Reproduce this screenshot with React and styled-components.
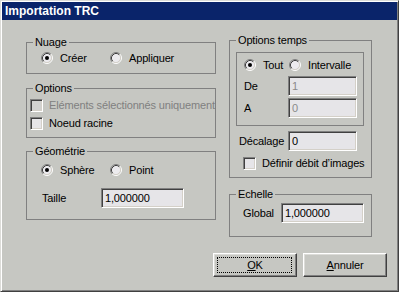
import React from 'react';
import styled, { createGlobalStyle } from 'styled-components';

const GlobalStyle = createGlobalStyle`
  html, body {
    margin: 0;
    padding: 0;
    background: #c6c7c2;
  }
  body {
    font-family: "Liberation Sans", Arial, sans-serif;
    font-size: 11px;
    letter-spacing: -0.15px;
    color: #000;
  }
`;

const Window = styled.div`
  box-sizing: border-box;
  width: 399px;
  height: 292px;
  padding: 1px;
  background: #c6c7c2;
  border: 1px solid;
  border-color: #dcdcd8 #404040 #404040 #dcdcd8;
  box-shadow: inset 1px 1px 0 #fff, inset -1px -1px 0 #808080;
  display: flex;
  flex-direction: column;
`;

const TitleBar = styled.div`
  height: 18px;
  background: #0a246a;
  display: flex;
  align-items: center;
  padding-left: 3px;
`;

const Title = styled.span`
  color: #fff;
  font-weight: bold;
  font-size: 12px;
  letter-spacing: 0;
`;

const Body = styled.div`
  padding: 14px 0 0 24px;
`;

const Columns = styled.div`
  display: flex;
  align-items: flex-start;
  gap: 13px;
`;

const Column = styled.div`
  display: flex;
  flex-direction: column;
  width: ${(p) => p.$width}px;
  margin-top: ${(p) => p.$offset || 0}px;
`;

const Group = styled.fieldset`
  margin: ${(p) => p.$gap || 0}px 0 0 0;
  padding: 0;
  border: 1px solid #808080;
  min-width: 0;
`;

const Legend = styled.legend`
  margin-left: 6px;
  padding: 0 2px;
  line-height: 13px;
  font-size: 11px;
`;

const GroupBody = styled.div`
  padding: ${(p) => p.$pad};
`;

const Row = styled.div`
  display: flex;
  align-items: center;
  height: ${(p) => p.$h || 18}px;
  margin-top: ${(p) => p.$mt || 0}px;
  padding-left: ${(p) => p.$pl || 0}px;
  white-space: nowrap;
`;

const Choice = styled.label`
  display: flex;
  align-items: center;
  width: ${(p) => (p.$width ? `${p.$width}px` : 'auto')};
  color: ${(p) => (p.$disabled ? '#808080' : '#000')};
`;

const Mark = styled.span`
  display: inline-flex;
  margin-right: ${(p) => p.$gap || 7}px;
`;

const CheckBox = styled.span`
  box-sizing: border-box;
  width: 13px;
  height: 13px;
  border: 1px solid;
  border-color: #808080 #fff #fff #808080;
  box-shadow: inset 1px 1px 0 #404040, inset -1px -1px 0 #d4d0c8;
  background: ${(p) => (p.$disabled ? '#d2d2d0' : '#e6e5e8')};
`;

const FieldLabel = styled.span`
  width: ${(p) => p.$width}px;
`;

const Field = styled.div`
  box-sizing: border-box;
  width: ${(p) => p.$width}px;
  height: 20px;
  display: flex;
  align-items: center;
  padding-left: 3px;
  border: 1px solid;
  border-color: #808080 #fff #fff #808080;
  box-shadow: inset 1px 1px 0 #404040, inset -1px -1px 0 #d4d0c8;
  background: #e6e5e8;
  color: ${(p) => (p.$disabled ? '#8a8a8a' : '#000')};
`;

const InsetBox = styled.div`
  width: 128px;
  box-sizing: border-box;
  margin: 5px 0 0 6px;
  padding: 3px 0 7px 7px;
  border: 1px solid #808080;
`;

const ButtonRow = styled.div`
  display: flex;
  justify-content: flex-end;
  gap: 6px;
  margin-top: 16px;
  padding-right: 10px;
`;

const Button = styled.button`
  box-sizing: border-box;
  position: relative;
  width: 84px;
  height: 24px;
  padding: 0;
  font-family: inherit;
  font-size: 11px;
  letter-spacing: inherit;
  color: #000;
  background: #c6c7c2;
  border: 1px solid;
  border-color: #fff #404040 #404040 #fff;
  box-shadow: inset -1px -1px 0 #808080, inset 1px 1px 0 #dcdcd8;
  outline: none;
`;

const Focus = styled.span`
  position: absolute;
  inset: 3px 4px 3px 3px;
  border: 1px dotted #000;
`;

const Key = styled.span`
  text-decoration: underline;
`;

function Radio({ checked }) {
  return (
    <svg width="12" height="12" viewBox="0 0 12 12">
      <circle cx="6" cy="6" r="4.5" fill="#ecebee" />
      <path d="M2.11 9.89 A5.5 5.5 0 0 1 9.89 2.11" stroke="#808080" fill="none" />
      <path d="M9.89 2.11 A5.5 5.5 0 0 1 2.11 9.89" stroke="#fff" fill="none" />
      <path d="M2.82 9.18 A4.5 4.5 0 0 1 9.18 2.82" stroke="#404040" fill="none" />
      <path d="M9.18 2.82 A4.5 4.5 0 0 1 2.82 9.18" stroke="#d4d0c8" fill="none" />
      {checked && <circle cx="6" cy="6" r="2" fill="#000" />}
    </svg>
  );
}

function RadioChoice({ label, checked, width }) {
  return (
    <Choice $width={width}>
      <Mark>
        <Radio checked={checked} />
      </Mark>
      {label}
    </Choice>
  );
}

function CheckChoice({ label, disabled }) {
  return (
    <Choice $disabled={disabled}>
      <Mark $gap={6}>
        <CheckBox $disabled={disabled} />
      </Mark>
      {label}
    </Choice>
  );
}

export default function App() {
  return (
    <>
      <GlobalStyle />
      <Window>
        <TitleBar>
          <Title>Importation TRC</Title>
        </TitleBar>
        <Body>
          <Columns>
            <Column $width={190} $offset={2}>
              <Group>
                <Legend>Nuage</Legend>
                <GroupBody $pad="0 0 6px 14px">
                  <Row>
                    <RadioChoice label="Créer" checked width={69} />
                    <RadioChoice label="Appliquer" />
                  </Row>
                </GroupBody>
              </Group>

              <Group $gap={8}>
                <Legend>Options</Legend>
                <GroupBody $pad="1px 0 5px 3px">
                  <Row>
                    <CheckChoice label="Eléments sélectionnés uniquement" disabled />
                  </Row>
                  <Row>
                    <CheckChoice label="Noeud racine" />
                  </Row>
                </GroupBody>
              </Group>

              <Group $gap={7}>
                <Legend>Géométrie</Legend>
                <GroupBody $pad="3px 0 11px 14px">
                  <Row>
                    <RadioChoice label="Sphère" checked width={69} />
                    <RadioChoice label="Point" />
                  </Row>
                  <Row $h={20} $mt={9} $pl={1}>
                    <FieldLabel $width={59}>Taille</FieldLabel>
                    <Field $width={83}>1,000000</Field>
                  </Row>
                </GroupBody>
              </Group>
            </Column>

            <Column $width={143}>
              <Group>
                <Legend>Options temps</Legend>
                <GroupBody $pad="0 0 5px 0">
                  <InsetBox>
                    <Row>
                      <RadioChoice label="Tout" checked width={45} />
                      <RadioChoice label="Intervalle" />
                    </Row>
                    <Row $h={20} $mt={2}>
                      <FieldLabel $width={44}>De</FieldLabel>
                      <Field $width={69} $disabled>1</Field>
                    </Row>
                    <Row $h={20} $mt={2}>
                      <FieldLabel $width={44}>A</FieldLabel>
                      <Field $width={69} $disabled>0</Field>
                    </Row>
                  </InsetBox>
                  <Row $h={20} $mt={5} $pl={9}>
                    <FieldLabel $width={49}>Décalage</FieldLabel>
                    <Field $width={69}>0</Field>
                  </Row>
                  <Row $mt={3} $pl={13}>
                    <CheckChoice label="Définir débit d’images" />
                  </Row>
                </GroupBody>
              </Group>

              <Group $gap={10}>
                <Legend>Echelle</Legend>
                <GroupBody $pad="2px 0 13px 13px">
                  <Row $h={20}>
                    <FieldLabel $width={38}>Global</FieldLabel>
                    <Field $width={83}>1,000000</Field>
                  </Row>
                </GroupBody>
              </Group>
            </Column>
          </Columns>

          <ButtonRow>
            <Button>
              <Focus />
              <Key>O</Key>K
            </Button>
            <Button>
              <Key>A</Key>nnuler
            </Button>
          </ButtonRow>
        </Body>
      </Window>
    </>
  );
}
